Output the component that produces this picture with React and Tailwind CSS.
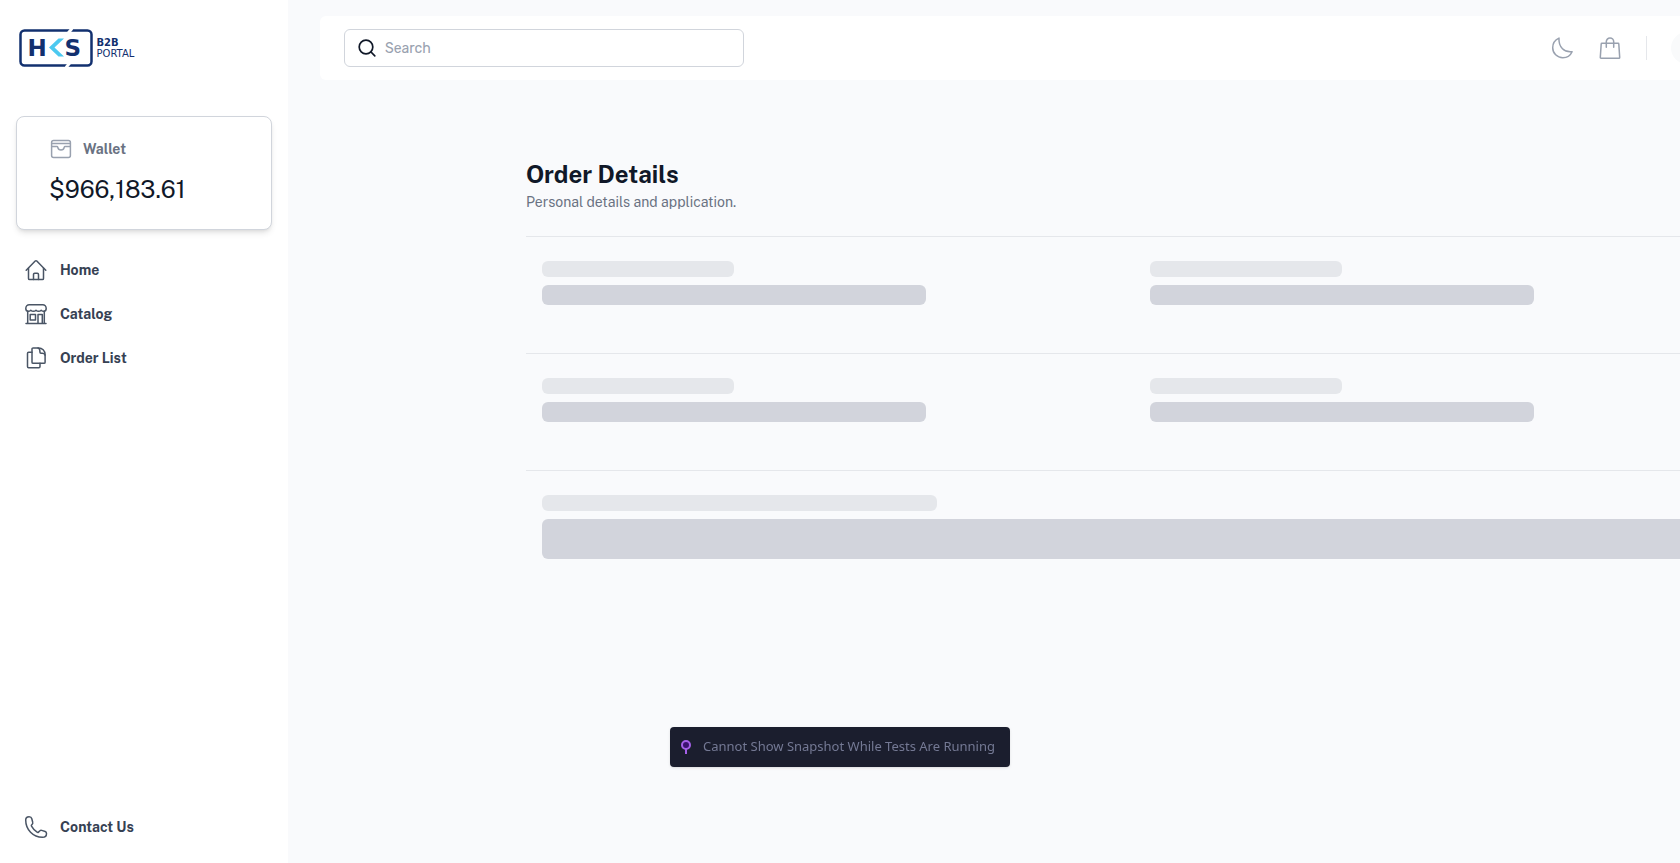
const body = "font-['Public_Sans',Inter,sans-serif]";

function Icon({ children, className = "size-6 text-gray-600" }) {
  return (
    <svg viewBox="0 0 24 24" fill="none" stroke="currentColor" strokeWidth="1.5" strokeLinecap="round" strokeLinejoin="round" className={className} aria-hidden="true">
      {children}
    </svg>
  );
}

const HomeIcon = () => (
  <Icon>
    <path d="M2.200 12.200 11.200 3a1.100 1.100 0 0 1 1.600 0l9 9.200" />
    <path d="M4.500 10.200v10.200c0 .6.5 1.100 1.100 1.100h12.800c.6 0 1.100-.5 1.100-1.100V10.200" />
    <path d="M9.500 21.500v-5c0-.7.500-1.200 1.200-1.200h2.600c.7 0 1.200.5 1.200 1.200v5" />
  </Icon>
);

const StoreIcon = () => (
  <Icon>
    <path d="M5.200 2.700h13.600c1.800 0 3.400 1.700 3.400 3.800 0 1.700-1 2.800-2.500 2.800-1.100 0-2-.6-2.500-1.100-.5.500-1.500 1.100-2.600 1.100S12.500 8.700 12 8.200c-.5.500-1.500 1.100-2.600 1.100S7.300 8.700 6.800 8.200c-.5.500-1.400 1.100-2.500 1.100-1.500 0-2.500-1.100-2.500-2.800 0-2.100 1.600-3.800 3.400-3.800Z" />
    <path d="M3.700 9.300v11.900M20.300 9.300v11.900M2 21.500h20" />
    <path d="M6.200 12.500h5.300v5.600H6.200zM14 21.200v-8.700h4.300v8.700" />
  </Icon>
);

const DocumentsIcon = () => (
  <Icon>
    <path d="M8 6.300H4.600c-.6 0-1.100.5-1.100 1.100v13.200c0 .6.5 1.100 1.100 1.100h10.300c.6 0 1.100-.5 1.100-1.100v-3.300" />
    <path d="M9.100 1.900h5.600c3.400 0 6.400 3 6.400 6.600v7.700c0 .6-.5 1.100-1.100 1.100H9.100c-.6 0-1.100-.5-1.100-1.100V3c0-.6.500-1.100 1.100-1.100Z" />
    <path d="M14 2c1.300.4 1.900 1.400 1.900 2.800v1.300c0 .6.500 1.100 1.100 1.100h1.300c1.400 0 2.400.7 2.700 1.900" />
  </Icon>
);

const PhoneIcon = () => (
  <Icon>
    <path d="M5.100 1.700C3 1.700 1.700 3 1.700 5c0 9.600 7.300 17.300 16.800 17.300 2.500 0 4-1.400 4-3.900 0-1-.4-1.600-1.300-1.900l-3.500-1.100c-.7-.2-1.300-.1-1.800.4l-1.400 1.300c-.4.400-.9.500-1.400.1-2.300-1.500-4.300-3.600-5.600-6-.3-.5-.2-1 .2-1.400l.7-.8c.4-.5.500-1.100.3-1.700l-.9-3.600c-.3-1.300-1.300-2-2.700-2Z" />
  </Icon>
);

const WalletIcon = () => (
  <Icon className="size-6 text-gray-400">
    <rect x="2.600" y="3.600" width="18.800" height="16.800" rx="2" />
    <path d="M2.800 6.600h18.400" />
    <path d="M2.800 9.500h5.100c.5 0 .8.300.9.800.3 1.600 1.500 2.700 3.200 2.700s2.900-1.100 3.200-2.700c.1-.5.400-.8.900-.8h5.100" />
  </Icon>
);

const MoonIcon = () => (
  <Icon className="size-6 text-gray-400">
    <path d="M9 2.100C5.200 3.800 2.700 7.500 2.700 11.700 2.700 17.400 7.200 21.700 12.800 21.700c4.200 0 7.700-2.400 9.300-6C14.500 16.700 8.400 11.300 9 2.100Z" />
  </Icon>
);

const BagIcon = () => (
  <Icon className="size-6 text-gray-400">
    <path d="M3.900 7.300h16.200c.4 0 .7.300.7.700l.9 13.400c0 .5-.3.800-.7.800H3c-.4 0-.7-.3-.7-.8L3.200 8c0-.4.300-.7.700-.7Z" />
    <path d="M8.300 11.200V5.800C8.300 3.700 9.900 2 12 2s3.700 1.700 3.700 3.800v5.400" />
  </Icon>
);

function Logo() {
  return (
    <svg viewBox="0 0 124 40" className="h-10 w-[124px]" role="img" aria-label="HKS B2B Portal">
      <rect x="4.500" y="2.500" width="71" height="35" rx="4" fill="none" stroke="#12306f" strokeWidth="2.500" />
      <path d="M51 6.500 56 .5M50 39.500l5-6" stroke="#fff" strokeWidth="3" />
      <g fill="#12306f" fontFamily="'DejaVu Sans', sans-serif">
        <text x="11.500" y="28" fontSize="23" fontWeight="700">H</text>
        <text x="48.500" y="28" fontSize="23" fontWeight="700">S</text>
        <text x="80.500" y="18" fontSize="10" fontWeight="700">B2B</text>
        <text x="80.500" y="29" fontSize="10">PORTAL</text>
      </g>
      <path d="M48 10.500h-5.500L33 19.500l9.500 9H48l-9.500-9Z" fill="#4cc9f0" />
    </svg>
  );
}

function NavItem({ icon: IconComponent, label }) {
  return (
    <a href="#" className="flex h-11 items-center gap-3 px-2 text-sm font-bold text-gray-700">
      <IconComponent />
      {label}
    </a>
  );
}

function Sidebar() {
  return (
    <aside className="flex w-72 shrink-0 flex-col bg-white px-4 pt-7 pb-3.5">
      <a href="#" className="block self-start">
        <Logo />
      </a>
      <section className="mt-12 rounded-lg border border-gray-300 bg-white px-8 pt-5 pb-6 shadow-md">
        <div className="flex h-6 items-center gap-2.5 text-sm font-bold text-gray-500">
          <WalletIcon />
          <h2>Wallet</h2>
        </div>
        <p className="mt-3 text-2xl text-gray-900">$966,183.61</p>
      </section>
      <nav aria-label="Main" className="mt-[18px] flex grow flex-col">
        <NavItem icon={HomeIcon} label="Home" />
        <NavItem icon={StoreIcon} label="Catalog" />
        <NavItem icon={DocumentsIcon} label="Order List" />
        <div className="mt-auto">
          <NavItem icon={PhoneIcon} label="Contact Us" />
        </div>
      </nav>
    </aside>
  );
}

function Header() {
  return (
    <header className="flex h-16 items-center rounded-l-md bg-white pl-6">
      <label className="flex h-[38px] w-[400px] items-center gap-2 rounded-md border border-gray-300 pl-3">
        <svg viewBox="0 0 20 20" fill="none" stroke="currentColor" strokeWidth="1.700" strokeLinecap="round" className="size-5 text-gray-900" aria-hidden="true">
          <circle cx="9" cy="9" r="6.800" />
          <path d="m14 14 3.800 3.800" />
        </svg>
        <input type="search" aria-label="Search" placeholder="Search" className="h-full grow bg-transparent font-[Rubik,Roboto,sans-serif] text-sm outline-none placeholder:text-gray-400" />
      </label>
      <div className="ml-auto flex items-center">
        <button type="button" aria-label="Dark mode"><MoonIcon /></button>
        <button type="button" aria-label="Cart" className="ml-6"><BagIcon /></button>
        <div className="ml-6 h-6 w-px bg-gray-200" />
        <div className="ml-6 h-8 w-[9px] overflow-hidden">
          <button type="button" aria-label="Account" className="block size-8 rounded-full bg-gray-50" />
        </div>
      </div>
    </header>
  );
}

function SkeletonField() {
  return (
    <div className="flex flex-col gap-2 px-4 pt-6 pb-12">
      <div className="h-4 w-48 rounded-md bg-gray-200" />
      <div className="h-5 w-96 rounded-md bg-[#d2d4dc]" />
    </div>
  );
}

function OrderDetails() {
  return (
    <section className="ml-[206px] w-[1216px] pt-[78px]">
      <h1 className="text-2xl font-bold text-gray-900">Order Details</h1>
      <p className="mt-0.5 text-sm text-gray-500">Personal details and application.</p>
      <div className="mt-6 divide-y divide-gray-200 border-t border-gray-200">
        <div className="grid grid-cols-2">
          <SkeletonField />
          <SkeletonField />
        </div>
        <div className="grid grid-cols-2">
          <SkeletonField />
          <SkeletonField />
        </div>
        <div className="flex flex-col gap-2 px-4 pt-6">
          <div className="h-4 w-1/3 rounded-md bg-gray-200" />
          <div className="h-10 rounded-md bg-[#d2d4dc]" />
        </div>
      </div>
    </section>
  );
}

function Toast() {
  return (
    <div role="status" className="fixed bottom-24 left-1/2 flex h-10 min-w-[340px] -translate-x-1/2 items-center gap-3 rounded bg-[#1b1e2e] px-[11px] font-['Segoe_UI','Noto_Sans',sans-serif] text-[13px] whitespace-nowrap text-[#747994] shadow">
      <svg viewBox="0 0 10 14" className="h-3.5 w-2.5" aria-hidden="true">
        <circle cx="5" cy="5" r="4" fill="#3b1270" stroke="#a560e8" strokeWidth="2" />
        <path d="M5 9v5" stroke="#a560e8" strokeWidth="2" />
      </svg>
      Cannot Show Snapshot While Tests Are Running
    </div>
  );
}

export default function App() {
  return (
    <div className={`flex min-h-screen bg-[#f9fafc] ${body}`}>
      <Sidebar />
      <main className="min-w-0 grow overflow-hidden pt-4 pl-8">
        <Header />
        <OrderDetails />
      </main>
      <Toast />
    </div>
  );
}
